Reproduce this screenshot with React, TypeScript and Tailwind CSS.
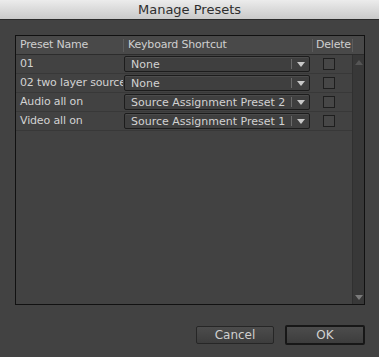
import React from "react";

const rows = [
  { name: "01", shortcut: "None" },
  { name: "02 two layer source", shortcut: "None" },
  { name: "Audio all on", shortcut: "Source Assignment Preset 2" },
  { name: "Video all on", shortcut: "Source Assignment Preset 1" },
];

function Dropdown({ value }: { value: string }) {
  return (
    <div className="flex h-[16px] w-[186px] items-center rounded-[2px] border border-[#1c1c1c] bg-[#3f3f3f] shadow-[inset_0_1px_0_#4c4c4c]">
      <span className="flex-1 overflow-hidden whitespace-nowrap pl-[6px] text-[11px] leading-none text-[#d2d2d2]">{value}</span>
      <div className="h-[10px] w-px bg-[#6a6a6a]" />
      <div className="flex w-[17px] items-center justify-center">
        <svg width="8" height="5" viewBox="0 0 8 5">
          <polygon points="0,0 8,0 4,5" fill="#c8c8c8" />
        </svg>
      </div>
    </div>
  );
}

export default function App() {
  return (
    <div
      className="flex h-[357px] w-[379px] flex-col bg-[#424242]"
      style={{ fontFamily: '"DejaVu Sans", sans-serif' }}
    >
      <div className="flex h-[20px] items-center justify-center border-b border-[#2a2a2a] bg-gradient-to-b from-[#ececec] to-[#c9c9c9] text-[13px] text-[#2e2e2e]">
        Manage Presets
      </div>
      <div className="pl-[15px] pt-[15px]">
        <div className="flex h-[270px] w-[350px] flex-col border border-[#111]">
          <div className="flex h-[19px] items-center border-b border-[#2c2c2c] bg-[#494949] text-[11px] tracking-[-0.2px] text-[#cfcfcf]">
            <div className="w-[107px] pl-[4px]">Preset Name</div>
            <div className="h-[13px] w-px bg-[#5c5c5c]" />
            <div className="w-[188px] pl-[4px]">Keyboard Shortcut</div>
            <div className="h-[13px] w-px bg-[#5c5c5c]" />
            <div className="w-[39px] overflow-hidden whitespace-nowrap pl-[3px]">Delete</div>
            <div className="h-[13px] w-px bg-[#5c5c5c]" />
            <div className="flex-1" />
          </div>
          <div className="flex flex-1">
            <div className="flex flex-1 flex-col">
              {rows.map((r) => (
                <div key={r.name} className="flex h-[19px] items-center border-b border-[#383838]">
                  <div className="w-[107px] overflow-hidden whitespace-nowrap pl-[4px] text-[11px] tracking-[-0.15px] text-[#d2d2d2]">{r.name}</div>
                  <div className="w-[189px] pl-[1px]">
                    <Dropdown value={r.shortcut} />
                  </div>
                  <div className="flex w-[40px] pl-[11px]">
                    <div className="h-[12px] w-[12px] border border-[#1e1e1e] bg-[#474747]" />
                  </div>
                </div>
              ))}
            </div>
            <div className="flex w-[12px] flex-col items-center justify-between border-l border-[#303030] bg-[#383838] pb-[4px] pt-[5px]">
              <svg width="8" height="5" viewBox="0 0 8 5">
                <polygon points="4,0 8,5 0,5" fill="#555" />
              </svg>
              <svg width="8" height="5" viewBox="0 0 8 5">
                <polygon points="0,0 8,0 4,5" fill="#7a7a7a" />
              </svg>
            </div>
          </div>
        </div>
      </div>
      <div className="flex justify-end gap-[11px] pr-[14px] pt-[20px]">
        <button className="mt-[1px] flex h-[18px] w-[78px] items-center justify-center rounded-[2px] border border-[#262626] bg-gradient-to-b from-[#4c4c4c] to-[#3d3d3d] text-[12px] text-[#cfcfcf]">
          Cancel
        </button>
        <button className="flex h-[20px] w-[80px] items-center justify-center rounded-[2px] border-2 border-[#171717] bg-gradient-to-b from-[#4c4c4c] to-[#3d3d3d] text-[12px] text-[#d2d2d2]">
          OK
        </button>
      </div>
    </div>
  );
}
